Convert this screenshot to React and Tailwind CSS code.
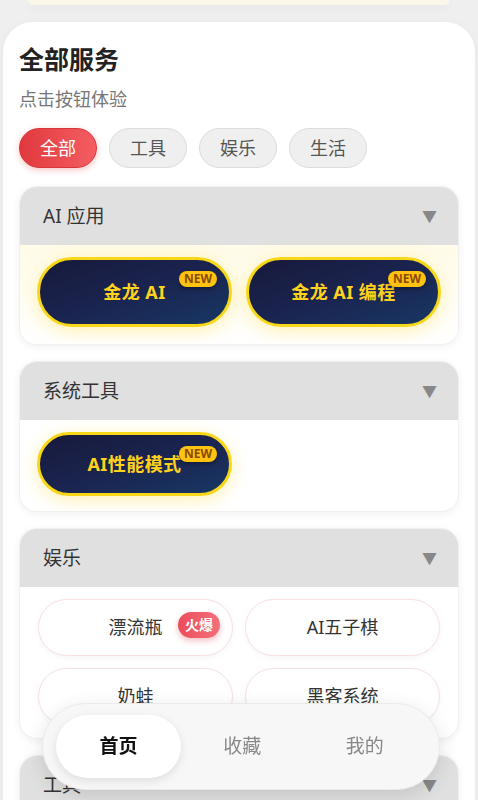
import React from 'react';

const font = { fontFamily: '"Noto Sans", "Noto Sans CJK SC", sans-serif' };

const GoldButton = ({ label, tall }) => (
  <button className={`relative ${tall ? 'h-[70px]' : 'h-[64px]'} rounded-full border-[3px] border-[#f7d718] bg-gradient-to-br from-[#17193a] via-[#1a2450] to-[#173764] shadow-[0_4px_18px_rgba(255,215,40,0.35)] flex items-center justify-center`}>
    <span className="text-[18px] font-bold text-[#ffd21c] tracking-wide">{label}</span>
    <span className="absolute right-[12px] top-[11px] rounded-full bg-[#ffc20e] px-[5px] text-[12px] leading-[16px] font-bold text-[#8a4a00] shadow-[0_2px_4px_rgba(0,0,0,0.35)]">
      NEW
    </span>
  </button>
);

const PlainButton = ({ label, hot }) => (
  <button className="relative h-[57px] rounded-full border border-[#f6e0e0] bg-white shadow-[0_2px_6px_rgba(0,0,0,0.04)] flex items-center justify-center">
    <span className="text-[18px] text-[#333]">{label}</span>
    {hot && (
      <span className="absolute right-[12px] top-[12px] rounded-full bg-gradient-to-r from-[#ec4c5c] to-[#f3707a] px-[7px] text-[14px] leading-[26px] font-bold text-white shadow-[0_3px_6px_rgba(236,76,92,0.35)]">
        火爆
      </span>
    )}
  </button>
);

const Section = ({ title, children, bodyClass }) => (
  <div className="rounded-[18px] overflow-hidden bg-white border border-[#f0f0f0] shadow-[0_2px_8px_rgba(0,0,0,0.06)]">
    <div className="h-[58px] bg-[#e0e0e0] flex items-center justify-between pl-[23px] pr-[21px]">
      <span className="text-[19px] text-[#333]">{title}</span>
      <span className="text-[15px] text-[#888]">▼</span>
    </div>
    <div className={bodyClass}>{children}</div>
  </div>
);

export default function App() {
  return (
    <div className="min-h-[800px] bg-[#efefef] overflow-hidden" style={font}>
      {/* previous card edge */}
      <div className="mx-[28px] h-[5px] rounded-b-[14px] bg-[#faf6ea] shadow-[0_3px_8px_rgba(0,0,0,0.05)]" />

      <div className="mx-[3px] mt-[17px] rounded-[30px] bg-white px-[16px] pt-[20px] pb-[80px] shadow-[0_2px_10px_rgba(0,0,0,0.04)]">
        <h1 className="text-[25px] font-bold text-[#222] leading-[34px]">全部服务</h1>
        <p className="mt-[10px] text-[18px] text-[#777] leading-[26px]">点击按钮体验</p>

        <div className="mt-[16px] flex gap-[12px]">
          <span className="w-[78px] h-[40px] rounded-full bg-gradient-to-r from-[#e0383e] to-[#f45d62] border border-[#d8363a] text-white text-[18px] flex items-center justify-center shadow-[0_2px_6px_rgba(230,60,60,0.3)]">全部</span>
          {['工具', '娱乐', '生活'].map((t) => (
            <span key={t} className="w-[78px] h-[40px] rounded-full bg-[#efefef] border border-[#dcdcdc] text-[#555] text-[18px] flex items-center justify-center">{t}</span>
          ))}
        </div>

        <div className="mt-[18px] flex flex-col gap-[16px]">
          <Section title="AI 应用" bodyClass="grid grid-cols-2 gap-[14px] px-[17px] pt-[12px] pb-[17px] bg-gradient-to-b from-[#fffbe8] to-white">
            <GoldButton label="金龙 AI" tall />
            <GoldButton label="金龙 AI 编程" tall />
          </Section>

          <Section title="系统工具" bodyClass="grid grid-cols-2 gap-[14px] px-[17px] pt-[12px] pb-[15px]">
            <GoldButton label="AI性能模式" />
          </Section>

          <Section title="娱乐" bodyClass="grid grid-cols-2 gap-x-[12px] gap-y-[12px] px-[18px] pt-[12px] pb-[13px]">
            <PlainButton label="漂流瓶" hot />
            <PlainButton label="AI五子棋" />
            <PlainButton label="奶蛙" />
            <PlainButton label="黑客系统" />
          </Section>

          <Section title="工具" bodyClass="h-[100px]" />
        </div>
      </div>

      {/* bottom nav */}
      <div className="fixed left-[42px] right-[38px] top-[703px] h-[87px] rounded-full bg-[#f7f7f7] border border-[#eaeaea] shadow-[0_6px_20px_rgba(0,0,0,0.12)] flex items-center px-[13px]">
        <div className="w-[125px] h-[63px] rounded-full bg-white shadow-[0_3px_10px_rgba(0,0,0,0.1)] flex items-center justify-center text-[19px] font-bold text-[#111]">首页</div>
        <div className="flex-1 flex items-center justify-around text-[19px] text-[#888]">
          <span>收藏</span>
          <span>我的</span>
        </div>
      </div>
    </div>
  );
}
